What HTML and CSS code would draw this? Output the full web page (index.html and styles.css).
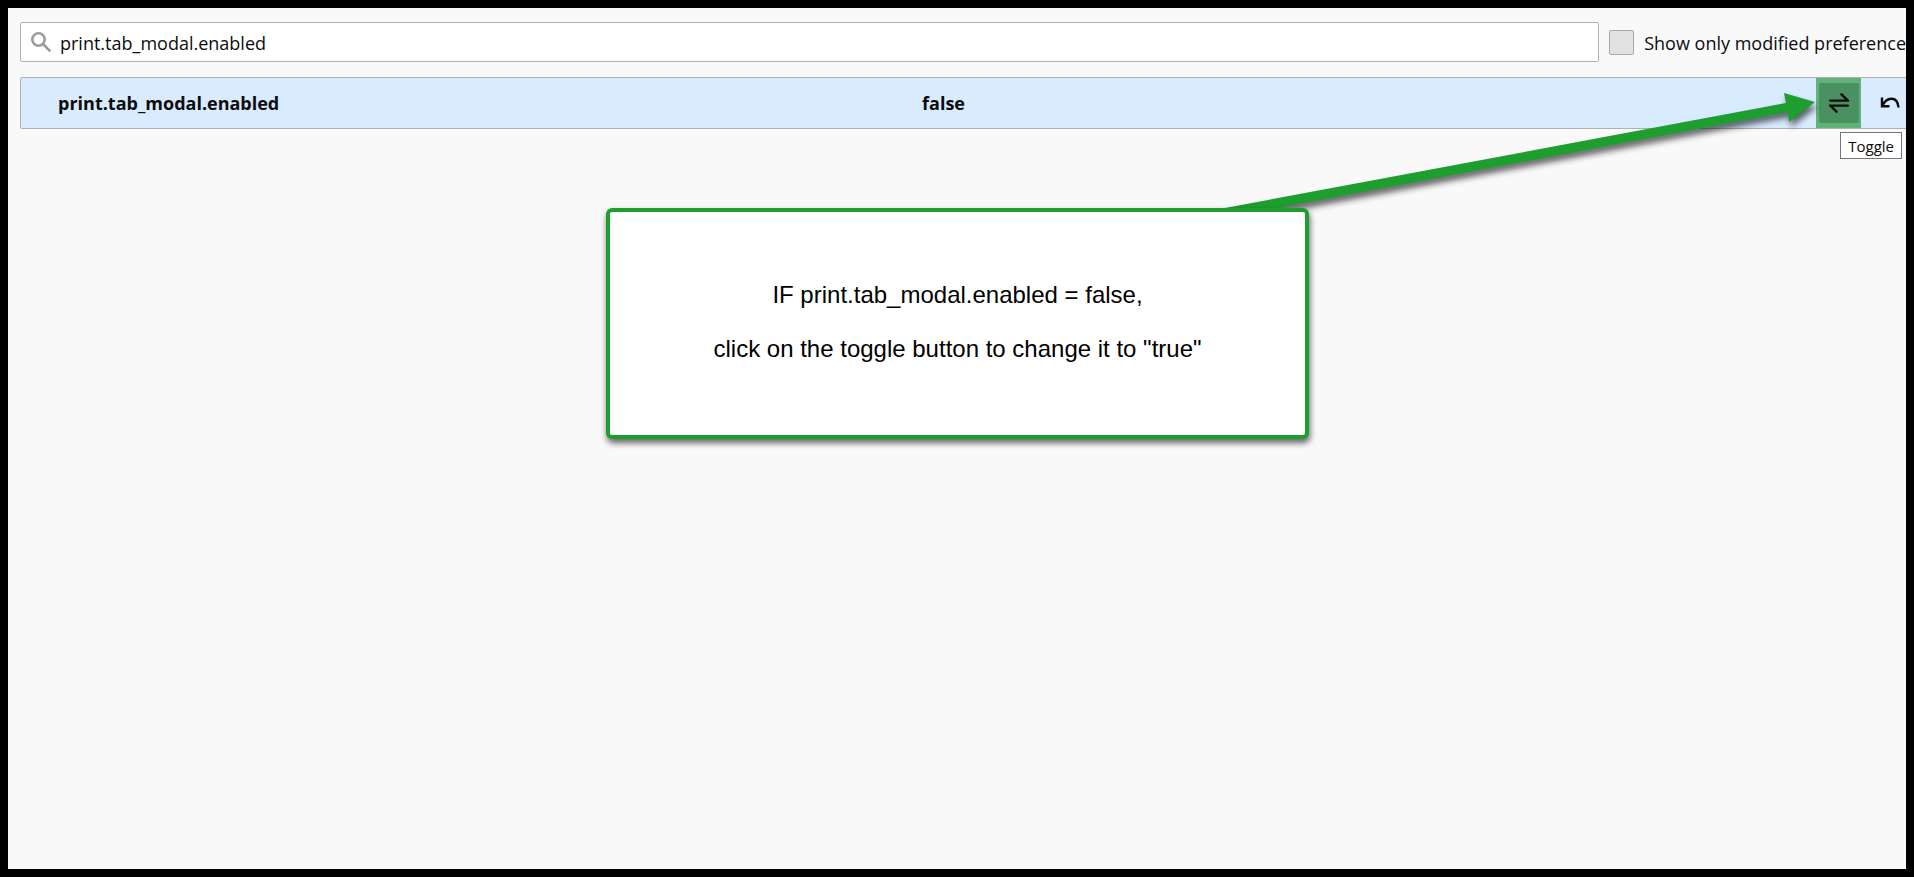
FILE: index.html
```html
<!DOCTYPE html>
<html lang="en">
<head>
<meta charset="utf-8">
<title>Advanced Preferences</title>
<link rel="stylesheet" href="styles.css">
</head>
<body>
<main class="page">
  <div class="toolbar">
    <div class="search">
      <svg class="search-icon" viewBox="0 0 20 20" aria-hidden="true"><circle cx="7.5" cy="7.5" r="6.2"/><path d="M12 12l7.3 7.3"/></svg>
      <input class="search-input" type="text" aria-label="Search preference name" value="print.tab_modal.enabled">
    </div>
    <input class="check" type="checkbox" id="modified">
    <label class="check-label" for="modified">Show only modified preference</label>
  </div>
  <table class="prefs">
    <tr>
      <th class="name" scope="row">print.tab_modal.enabled</th>
      <td class="value">false</td>
      <td class="toggle-cell">
        <button class="btn btn-toggle" type="button" aria-label="Toggle">
          <svg class="icon" viewBox="0 0 20 20" aria-hidden="true"><path d="M1.200 7.600H18.800L12.500 1.300M18.800 12.600H1.200L7.500 18.700"/></svg>
        </button>
      </td>
      <td class="reset-cell">
        <button class="btn" type="button" aria-label="Reset">
          <svg class="icon icon-undo" viewBox="0 0 20 20" aria-hidden="true"><path d="M2 4.500V13.300H9.500M2.500 13C6 4 17.500 2 18.500 14.500"/></svg>
        </button>
      </td>
    </tr>
  </table>
  <svg class="arrow" viewBox="0 0 620 140" aria-hidden="true"><path d="M1 119L578 11L576 1L607 10L581 30L580 20L1 129Z"/></svg>
  <div class="tooltip" role="tooltip">Toggle</div>
  <section class="callout">
    <p>IF print.tab_modal.enabled = false,</p>
    <p>click on the toggle button to change it to "true"</p>
  </section>
</main>
</body>
</html>
```
FILE: styles.css
```css
* { box-sizing: border-box; }
body {
  margin: 0;
  font-family: "Open Sans", "Noto Sans", sans-serif;
  font-size: 18px;
  color: #0c0c0d;
}
.page {
  position: relative;
  min-height: 100vh;
  padding: 14px 0 0 12px;
  border: 8px solid #000;
  background: #f9f9fa;
  overflow: hidden;
}
.toolbar {
  display: flex;
  align-items: center;
}
.search {
  display: flex;
  flex: 1;
  align-items: center;
  height: 40px;
  padding-left: 10px;
  border: 1px solid #b1b1b3;
  border-radius: 2px;
  background: #fff;
}
.search-icon {
  width: 20px;
  height: 20px;
  fill: none;
  stroke: #9b9b9b;
  stroke-width: 2.6;
}
.search-input {
  flex: 1;
  height: 100%;
  padding: 2px 0 0 9px;
  border: 0;
  outline: 0;
  background: none;
  font: inherit;
  color: inherit;
}
.check {
  appearance: none;
  width: 25px;
  height: 25px;
  margin: 0 10px;
  border: 1px solid #a9a9ab;
  border-radius: 2px;
  background: #e1e1e2;
}
.check-label {
  padding-top: 2px;
  white-space: nowrap;
}
.prefs {
  width: calc(100% + 13px);
  height: 52px;
  margin-top: 15px;
  border: 1px solid #b1b1b3;
  border-radius: 2px;
  border-spacing: 0;
  background: #d9ebff;
  table-layout: fixed;
  font-weight: 700;
}
.prefs th,
.prefs td { padding: 0; text-align: left; }
.prefs .name { width: 47.5%; padding-left: 37px; }
.prefs .toggle-cell {
  width: 45px;
  background: #5fb376;
  text-align: center;
}
.prefs .reset-cell { width: 57px; text-align: center; }
.btn {
  display: inline-grid;
  place-items: center;
  width: 40px;
  height: 40px;
  padding: 0;
  border: 0;
  border-radius: 2px;
  background: none;
  color: inherit;
  vertical-align: middle;
}
.btn-toggle { background: #4a9060; }
.icon {
  width: 20px;
  height: 20px;
  fill: none;
  stroke: currentColor;
  stroke-width: 2.4;
  stroke-linecap: round;
}
.icon-undo { stroke-linecap: butt; }
.arrow {
  position: absolute;
  top: 84px;
  right: 78px;
  width: 620px;
  height: 140px;
  overflow: visible;
  fill: #1d9e2e;
  filter: drop-shadow(2px 5px 3px rgba(0, 0, 0, 0.6));
}
.tooltip {
  position: absolute;
  top: 124px;
  right: 4px;
  padding: 1px 7px 0;
  border: 1px solid #767676;
  background: #fff;
  font-size: 15px;
  line-height: 24px;
}
.callout {
  position: absolute;
  top: 200px;
  left: 50%;
  width: 703px;
  margin-left: -351px;
  padding: 56px 0 59px;
  border: 4px solid #1d9e2e;
  border-radius: 6px;
  background: #fff;
  box-shadow: 1px 4px 6px rgba(0, 0, 0, 0.6);
  color: #000;
  font-family: "Liberation Sans", Arial, sans-serif;
  font-size: 24px;
  line-height: 54px;
  text-align: center;
}
.callout p { margin: 0; }
```
